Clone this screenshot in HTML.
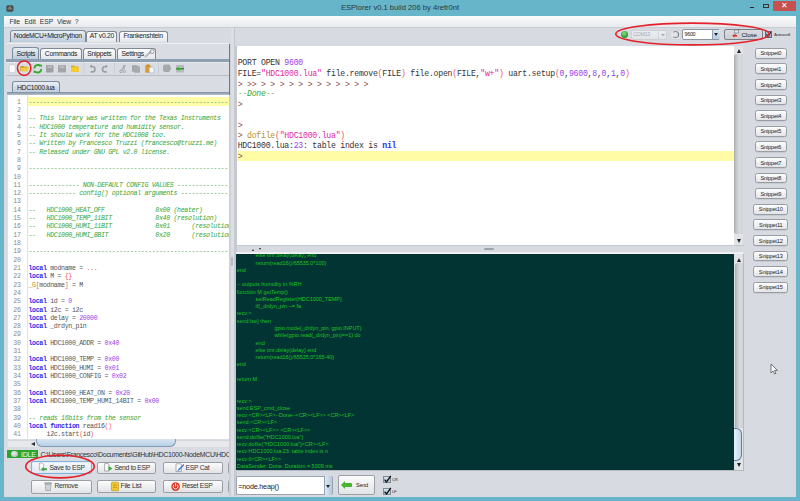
<!DOCTYPE html>
<html><head><meta charset="utf-8">
<style>
*{box-sizing:border-box;margin:0;padding:0}
html,body{width:800px;height:501px;overflow:hidden}
body{position:relative;background:#66b5c8;font-family:"Liberation Sans",sans-serif;color:#222}
.a{position:absolute}
.ui{font-size:6.8px;letter-spacing:-0.3px;line-height:1;white-space:pre}
.tab{position:absolute;border:1px solid #7f8791;border-bottom:none;border-radius:3px 3px 0 0;background:linear-gradient(#fdfdfd,#e4e6ea);font-size:6.8px;letter-spacing:-0.3px;line-height:1;white-space:pre;text-align:center;color:#222}
.tab.sel{background:linear-gradient(#e9eef4,#bccbdb);border-color:#7d8da0}
.btn{position:absolute;border:1px solid #9a9fa6;border-radius:2px;background:linear-gradient(#fcfcfc,#e2e3e6);font-size:6.8px;letter-spacing:-0.3px;line-height:1;white-space:pre;color:#222}
.snip{position:absolute;border:1px solid #989ca3;border-radius:2.5px;background:linear-gradient(#fdfdfd,#e3e4e7);font-size:5.6px;letter-spacing:-0.15px;line-height:1;white-space:pre;color:#222;text-align:center;box-shadow:0 .6px .6px #b9bdc3}
.ed{position:absolute;font-family:"Liberation Mono",monospace;font-size:6.6px;letter-spacing:-0.33px;white-space:pre}
.ln{position:absolute;font-family:"Liberation Mono",monospace;font-size:6.6px;letter-spacing:-0.27px;white-space:pre;color:#8a8a8a;text-align:right;width:13px}
.cm{color:#36a636;font-style:italic}
.kw{color:#2b2bf0;font-weight:bold}
.nu{color:#9b3ce8}
.br{color:#f25555}
.id{color:#555}
.st{color:#e02aa8}
.ol{color:#b8902e}
.id3{color:#333}
.gt{color:#8c4c4c;position:relative;top:0.7px}
.cm2{color:#36a636;font-style:italic}
.tm{position:absolute;font-family:"Liberation Mono",monospace;font-size:8.2px;letter-spacing:-0.25px;white-space:pre;color:#333;left:237.7px}
.lg{position:absolute;font-family:"Liberation Sans",sans-serif;font-size:5.45px;white-space:pre;color:#1cc41c}
</style></head><body>
<!-- title bar -->
<svg class="a" style="left:5.5px;top:4.5px" width="8" height="7" viewBox="0 0 8 7"><rect x="0.3" y="0.3" width="7.2" height="6.4" rx="1.6" fill="#4a4848"/><path d="M2.6 2.2h2.6M1.6 3.9h4.6" stroke="#d8d8d8" stroke-width="0.6"/></svg>
<div class="a" style="left:0;top:4.4px;width:800px;text-align:center;font-size:7.6px;line-height:1;color:#2a3a40;white-space:pre">ESPlorer v0.1 build 206 by 4refr0nt</div>
<div class="a" style="left:750px;top:7px;width:4px;height:1.3px;background:#2a2a2a"></div>
<div class="a" style="left:763px;top:3.5px;width:6px;height:4.5px;border:1px solid #333;border-top-width:1.6px"></div>
<div class="a" style="left:773px;top:1px;width:23px;height:10px;background:#c75050"></div>
<div class="a" style="left:773px;top:1px;width:23px;height:10px;color:#fff;font-size:8px;line-height:10px;text-align:center">&#x2715;</div>

<!-- client -->
<div class="a" style="left:4px;top:16px;width:792px;height:480.7px;background:#d7dae1"></div>
<!-- menu -->
<div class="a" style="left:4px;top:16px;width:792px;height:11.5px;background:linear-gradient(#fbfbfc,#e9eaee);border-bottom:1px solid #c9ccd2"></div>
<div class="a ui" style="left:9.4px;top:18.9px;color:#333;letter-spacing:-0.1px">File</div>
<div class="a ui" style="left:24.4px;top:18.9px;color:#333;letter-spacing:-0.1px">Edit</div>
<div class="a ui" style="left:39.8px;top:18.9px;color:#333;letter-spacing:-0.1px">ESP</div>
<div class="a ui" style="left:56.9px;top:18.9px;color:#333;letter-spacing:-0.1px">View</div>
<div class="a ui" style="left:74.8px;top:18.9px;color:#333;letter-spacing:-0.1px">?</div>

<!-- LEFT PANEL -->
<!-- outer tabs -->
<div class="tab sel" style="left:10px;top:29.6px;width:75.5px;height:12.4px;padding-top:2.5px">NodeMCU+MicroPython</div>
<div class="tab" style="left:86.2px;top:30.8px;width:31.3px;height:11.2px;padding-top:1.7px">AT v0.20</div>
<div class="tab" style="left:118.6px;top:30.8px;width:49px;height:11.2px;padding-top:1.7px">Frankenshtein</div>
<!-- outer content panel -->
<div class="a" style="left:5px;top:42.5px;width:225.5px;height:453px;background:#d9dce2;border-top:1px solid #eceef1;border-right:1px solid #8d96a0;border-top-left-radius:3px"></div>
<!-- inner tabs -->
<div class="tab sel" style="left:12.4px;top:47.2px;width:27px;height:11.5px;padding-top:3px">Scripts</div>
<div class="tab" style="left:40px;top:47.6px;width:42px;height:11px;padding-top:2.4px">Commands</div>
<div class="tab" style="left:82.8px;top:47.6px;width:33.2px;height:11px;padding-top:2.4px">Snippets</div>
<div class="tab" style="left:116.6px;top:47.6px;width:39.8px;height:11px;padding-top:2.4px;text-align:left;padding-left:4px">Settings</div>
<svg class="a" style="left:144px;top:49px" width="12" height="9" viewBox="0 0 12 9"><path d="M1.5 7.5l5-4.6" stroke="#8a8f96" stroke-width="1.6" stroke-linecap="round"/><path d="M1.5 7.5l5-4.6" stroke="#f4f5f7" stroke-width="0.6" stroke-linecap="round"/><circle cx="8" cy="2.6" r="2" fill="none" stroke="#8a8f96" stroke-width="0.9"/></svg>
<div class="a" style="left:6.4px;top:59px;width:223.5px;height:2.7px;background:#8e9fb2"></div>
<!-- toolbar -->
<div class="a" style="left:6.4px;top:61.6px;width:223.5px;height:14.6px;background:#d9dce2;border-top:0.8px solid #e8eaee;border-bottom:0.9px solid #b9bdc5"></div>
<svg class="a" style="left:0;top:60px" width="230" height="18" viewBox="0 60 230 18">
<!-- new file -->
<path d="M9.3 64.7h4.4l1.6 1.6v6.1h-6z" fill="#fbfbfb" stroke="#c2c4c8" stroke-width="0.6"/>
<!-- open folder -->
<path d="M20.8 66h3l.7.8h3.3v1.2h-7z" fill="#c89a1c"/>
<path d="M20.6 71.2l1.4-3.8h7l-1.4 3.8z" fill="#f2cc3a"/>
<path d="M20.6 66.5v4.7" stroke="#c89a1c" stroke-width="0.7"/>
<!-- green refresh -->
<path d="M34.3 68.5a3.6 3.6 0 0 1 6.2-2.4" fill="none" stroke="#36a82e" stroke-width="1.9"/>
<path d="M41.3 69a3.6 3.6 0 0 1 -6.2 2.4" fill="none" stroke="#36a82e" stroke-width="1.9"/>
<path d="M39.2 64.6l2.8 0.2-0.4 3z" fill="#36a82e"/>
<path d="M36.3 72.9l-2.8-0.2 0.4-3z" fill="#36a82e"/>
<!-- gray disks -->
<rect x="46" y="65" width="7.5" height="7.5" rx="0.8" fill="#9d9fa2"/>
<rect x="47.2" y="65.6" width="5" height="2.6" fill="#b6b8bb"/>
<rect x="58" y="65" width="8" height="7.5" rx="0.8" fill="#a2a4a7"/>
<rect x="59.5" y="65.6" width="5" height="2.6" fill="#b9bbbe"/>
<!-- yellow folder -->
<path d="M71 65.6h3l.8.9h3.7v5.5h-7.5z" fill="#e2ae0a"/>
<rect x="71" y="67.3" width="7.5" height="4.7" fill="#f6cd2a"/>
<!-- separators -->
<rect x="83.6" y="62.5" width="0.7" height="12" fill="#c5c8ce"/>
<rect x="114" y="62.5" width="0.7" height="12" fill="#c5c8ce"/>
<rect x="158.2" y="62.5" width="0.7" height="12" fill="#c5c8ce"/>
<!-- undo/redo -->
<path d="M90.5 66.3l1.8 0.2a2.6 2.6 0 0 1 0 5.4h-1.6" fill="none" stroke="#9c9ea1" stroke-width="1.6"/>
<path d="M89.4 66.3l2.4-1.6v3.2z" fill="#9c9ea1"/>
<path d="M107 66.3l-1.8 0.2a2.6 2.6 0 0 0 0 5.4h1.6" fill="none" stroke="#9c9ea1" stroke-width="1.6"/>
<path d="M108.1 66.3l-2.4-1.6v3.2z" fill="#9c9ea1"/>
<!-- scissors -->
<path d="M125.5 65l-3.8 5" stroke="#9fa1a4" stroke-width="1.2"/>
<path d="M123.5 65.3l0.8 4" stroke="#9fa1a4" stroke-width="1"/>
<circle cx="121" cy="71.3" r="1.3" fill="none" stroke="#9fa1a4" stroke-width="0.9"/>
<circle cx="124.4" cy="71.5" r="1.1" fill="none" stroke="#9fa1a4" stroke-width="0.9"/>
<!-- copy -->
<rect x="132" y="65.3" width="5.8" height="6.4" rx="0.6" fill="#a3a5a8"/>
<rect x="134" y="66.3" width="6" height="6.4" rx="0.6" fill="#a8aaad"/>
<!-- paste -->
<rect x="145.2" y="65.3" width="5.6" height="7.5" rx="0.8" fill="#e09a2a"/>
<rect x="146.5" y="64.6" width="3" height="1.4" rx="0.5" fill="#c4852a"/>
<path d="M149.2 67.2h3.5l1.3 1.3v4.4h-4.8z" fill="#f4f8fd" stroke="#8aaee0" stroke-width="0.6"/>
<!-- gray rounded -->
<rect x="163" y="64.6" width="7.4" height="7.4" rx="2" fill="#a6a8ab"/>
<path d="M169.5 67.5l1.5 1-1.5 1z" fill="#8d8f92"/>
<!-- green arrow icon -->
<rect x="176" y="65" width="8" height="7.5" fill="#b7babe"/>
<rect x="176" y="68.3" width="8" height="0.9" fill="#3b3d40"/>
<path d="M176.2 68.8l2.5-2.2v1.3h2.5v1.8h-2.5v1.3z" fill="#2fb42a"/>
</svg>

<!-- file tab -->
<div class="tab sel" style="left:12px;top:80.5px;width:47.5px;height:12.3px;padding-top:3.2px">HDC1000.lua</div>
<div class="a" style="left:7px;top:91.7px;width:222px;height:3.3px;background:linear-gradient(#7d8c9e,#9aaabb 50%,#b3c0ce)"></div>
<div class="a" style="left:7px;top:94.8px;width:222px;height:1px;background:#e2e5ea"></div>
<!-- editor -->
<div class="a" style="left:8px;top:94.8px;width:221px;height:344.6px;background:#fff"></div>
<div class="a" style="left:27.3px;top:94.8px;width:0.7px;height:344.8px;background:#e2e2e2"></div>
<div class="a" style="left:27.6px;top:96.8px;width:201.4px;height:8.9px;background:#fffca8"></div>
<div class="a" style="left:8px;top:94.8px;width:221px;height:344.6px;overflow:hidden">
<div class="ln" style="left:-0.3px;top:3.9px;line-height:8.31px">1
2
3
4
5
6
7
8
9
10
11
12
13
14
15
16
17
18
19
20
21
22
23
24
25
26
27
28
29
30
31
32
33
34
35
36
37
38
39
40
41
42</div>
<div class="ed" style="left:20.4px;top:3.9px;line-height:8.31px"><span class="cm">------------------------------------------------------------</span>

<span class="cm">-- This library was written for the Texas Instruments</span>
<span class="cm">-- HDC1000 temperature and humidity sensor.</span>
<span class="cm">-- It should work for the HDC1008 too.</span>
<span class="cm">-- Written by Francesco Truzzi (francesco@truzzi.me)</span>
<span class="cm">-- Released under GNU GPL v2.0 license.</span>

<span class="cm">------------------------------------------------------------</span>

<span class="cm">-------------- NON-DEFAULT CONFIG VALUES --------------------</span>
<span class="cm">------------- config() optional arguments -------------------</span>

<span class="cm">--   HDC1000_HEAT_OFF              0x00 (heater)</span>
<span class="cm">--   HDC1000_TEMP_11BIT            0x40 (resolution)</span>
<span class="cm">--   HDC1000_HUMI_11BIT            0x01      (resolution)</span>
<span class="cm">--   HDC1000_HUMI_8BIT             0x20      (resolution)</span>

<span class="cm">------------------------------------------------------------</span>

<span class="kw">local</span><span class="id"> modname = </span><span class="br">...</span>
<span class="kw">local</span><span class="id"> M = </span><span class="br">{}</span>
<span class="ol">_G</span><span class="br">[</span><span class="id">modname</span><span class="br">]</span><span class="id"> = M</span>

<span class="kw">local</span><span class="id"> id = </span><span class="nu">0</span>
<span class="kw">local</span><span class="id"> i2c = i2c</span>
<span class="kw">local</span><span class="id"> delay = </span><span class="nu">20000</span>
<span class="kw">local</span><span class="id"> _drdyn_pin</span>

<span class="kw">local</span><span class="id"> HDC1000_ADDR = </span><span class="nu">0x40</span>

<span class="kw">local</span><span class="id"> HDC1000_TEMP = </span><span class="nu">0x00</span>
<span class="kw">local</span><span class="id"> HDC1000_HUMI = </span><span class="nu">0x01</span>
<span class="kw">local</span><span class="id"> HDC1000_CONFIG = </span><span class="nu">0x02</span>

<span class="kw">local</span><span class="id"> HDC1000_HEAT_ON = </span><span class="nu">0x20</span>
<span class="kw">local</span><span class="id"> HDC1000_TEMP_HUMI_14BIT = </span><span class="nu">0x00</span>

<span class="cm">-- reads 16bits from the sensor</span>
<span class="kw">local</span><span class="id"> </span><span class="kw">function</span><span class="id"> read16</span><span class="br">()</span>
<span class="id">     i2c.start</span><span class="br">(</span><span class="id">id</span><span class="br">)</span>
<span class="id">     i2c.address</span><span class="br">(</span><span class="id">id, HDC1000_ADDR, i2c.RECEIVER</span><span class="br">)</span></div>
</div>
<!-- hscroll -->
<div class="a" style="left:8px;top:439.5px;width:221.7px;height:7.5px;background:#e6e8eb;border-top:1px solid #d4d6da"></div>
<div class="a" style="left:30.5px;top:441.5px;width:0;height:0;border-right:4px solid #333;border-top:2.3px solid transparent;border-bottom:2.3px solid transparent"></div>
<div class="a" style="left:36px;top:439.3px;width:140px;height:7.5px;background:linear-gradient(#d8e6f3,#b7cfe6);border:1px solid #7f9bb6;border-radius:0 0 6px 6px;border-top:none"></div>
<!-- status -->
<div class="a" style="left:6.8px;top:449.6px;width:31.2px;height:8.6px;background:#2aa52e"></div>
<div class="a" style="left:11px;top:450.7px;width:6.8px;height:6.5px;border-radius:50%;background:radial-gradient(circle at 40% 35%,#f0f0f0,#a9a9a9)"></div>
<div class="a ui" style="left:21px;top:450.8px;color:#f2f8f2;font-size:7px;letter-spacing:-0.2px">IDLE</div>
<div class="a ui" style="left:40.4px;top:450.6px;color:#333;font-size:7px;letter-spacing:-0.32px;width:189px;overflow:hidden">C:\Users\Francesco\Documents\GitHub\HDC1000-NodeMCU\HDC1000</div>
<!-- buttons -->
<div class="btn" style="left:31.3px;top:460.6px;width:60.6px;height:13.7px;border-color:#7fb0df;background:linear-gradient(#f5f9fd,#e1e8f0);box-shadow:inset 0 0 0 0.6px #d6e6f6"></div>
<div class="btn" style="left:97px;top:461.5px;width:59.3px;height:12.8px"></div>
<div class="btn" style="left:162.5px;top:461.5px;width:60px;height:12.8px"></div>
<div class="btn" style="left:227.5px;top:461.5px;width:3px;height:12.8px"></div>
<div class="btn" style="left:31.3px;top:479.9px;width:60.6px;height:13.7px"></div>
<div class="btn" style="left:97px;top:479.9px;width:59.3px;height:13.2px"></div>
<div class="btn" style="left:162.5px;top:479.9px;width:60px;height:13.2px"></div>
<div class="btn" style="left:227.5px;top:479.9px;width:3px;height:13.2px"></div>
<svg class="a" style="left:30px;top:460px" width="200" height="36" viewBox="30 460 200 36">
<!-- save -->
<path d="M39.4 463h3l1.3 1.3v5.7h-4.3z" fill="#fafafa" stroke="#8d9094" stroke-width="0.6"/>
<path d="M41 469.2l2.6-2.4v1.4h3.3v2h-3.3v1.4z" fill="#3aa53a"/>
<!-- send -->
<path d="M104.6 463.6h3.6l0.6 0.8v6.6h-4.2z" fill="#fafafa" stroke="#7b7e82" stroke-width="0.6"/>
<path d="M108.7 466l3.6 2.5-3.6 2.5z" fill="#2fae2f"/>
<!-- esp cat -->
<path d="M176 463.8h4.6l0.8 0.8v7h-5.4z" fill="#fafafa" stroke="#7b7e82" stroke-width="0.6"/>
<path d="M177.3 471.2l1-2.2 4.3-4 1 1-4.2 4.2z" fill="#3b7fd8"/>
<path d="M182.4 465l0.9-0.9 1 1-0.9 0.9z" fill="#e33"/>
<!-- trash -->
<rect x="44.6" y="482.6" width="7" height="1.5" rx="0.5" fill="#b9bcc0" stroke="#80848a" stroke-width="0.4"/>
<path d="M45.3 484.3h5.6l-0.5 6.2h-4.6z" fill="#e4e6e9" stroke="#80848a" stroke-width="0.6"/>
<path d="M47.2 485v4.8M49 485v4.8" stroke="#9a9ea3" stroke-width="0.5"/>
<!-- file list -->
<rect x="111.4" y="482.2" width="7.2" height="8.5" rx="0.8" fill="#f0c92a" stroke="#b38d10" stroke-width="0.6"/>
<path d="M113 485h4M113 487.3h4" stroke="#a07c10" stroke-width="0.6"/>
<!-- reset -->
<circle cx="175.6" cy="486.6" r="4.3" fill="#e23a26"/>
<path d="M173.9 484.8a2.4 2.4 0 1 0 3.4 0" fill="none" stroke="#fff" stroke-width="0.9"/>
<path d="M175.6 483.3v3" stroke="#fff" stroke-width="0.9"/>
</svg>

<div class="a ui" style="left:49.4px;top:464.5px;color:#333">Save to ESP</div>
<div class="a ui" style="left:114.4px;top:464.5px;color:#333">Send to ESP</div>
<div class="a ui" style="left:185.6px;top:464.5px;color:#333">ESP Cat</div>
<div class="a ui" style="left:54.4px;top:483.2px;color:#333">Remove</div>
<div class="a ui" style="left:120.6px;top:483.2px;color:#333">File List</div>
<div class="a ui" style="left:181.9px;top:483.2px;color:#333">Reset ESP</div>

<!-- RIGHT PANEL -->
<!-- vertical divider -->
<div class="a" style="left:229px;top:42.5px;width:2px;height:453px;background:#cdd0d6"></div>
<div class="a" style="left:230.5px;top:28px;width:3.5px;height:468px;background:#dcdfe4"></div>
<div class="a" style="left:233.7px;top:28px;width:1.2px;height:17.5px;background:#c3c6cc"></div>
<div class="a" style="left:234px;top:45.5px;width:2.6px;height:450.5px;background:#c6c9d0"></div>
<div class="a" style="left:228.7px;top:43.5px;width:1px;height:51.5px;background:#737a86"></div>
<div class="a" style="left:231.2px;top:256.5px;width:2.2px;height:9.5px;border-radius:1px;background:#b5b9c0"></div>
<!-- top toolbar -->
<div class="a" style="left:620.8px;top:30.8px;width:7px;height:7px;border-radius:50%;background:radial-gradient(circle at 45% 35%,#8fe08f,#2e9e33 60%,#1f7a24)"></div>
<div class="a" style="left:630.5px;top:29.5px;width:36px;height:10px;border:1px solid #cdd0d5;border-radius:2px;background:linear-gradient(#eceef1,#e1e3e7)"></div>
<div class="a" style="left:658px;top:30px;width:1px;height:9px;background:#d3d6da"></div>
<div class="a ui" style="left:633px;top:32px;font-size:5.4px;color:#a9abb0">COM13</div>
<div class="a" style="left:661px;top:33.5px;width:0;height:0;border-top:2.5px solid #9ea2a8;border-left:2px solid transparent;border-right:2px solid transparent"></div>
<div class="a" style="left:669.5px;top:29.5px;width:11.5px;height:10px;border:1px solid #d3d6da;border-radius:2px;background:#e1e3e7"></div>
<div class="a" style="left:671.8px;top:30.8px;width:7px;height:7px;border-radius:50%;border:1.3px solid #8a8d92;border-left-color:transparent;border-right-color:#6f7278"></div>
<div class="a" style="left:682.3px;top:29.3px;width:38.2px;height:10.5px;border:1px solid #8c96a2;border-radius:2px;background:#fff"></div>
<div class="a" style="left:712px;top:29.8px;width:8px;height:9.5px;background:linear-gradient(#dce7f2,#b9cde0);border-left:1px solid #8fa2b6"></div>
<div class="a" style="left:714.2px;top:33.4px;width:0;height:0;border-top:3px solid #222;border-left:2px solid transparent;border-right:2px solid transparent"></div>
<div class="a ui" style="left:684.5px;top:32px;font-size:5.4px;color:#222">9600</div>
<div class="a" style="left:723.5px;top:29.3px;width:39.3px;height:10.5px;border:1px solid #7b8088;border-radius:2px;background:linear-gradient(#d9dce1,#ccd0d6)"></div>
<svg class="a" style="left:730px;top:29px" width="12" height="10" viewBox="0 0 12 10"><rect x="4.3" y="1" width="4.4" height="3" fill="#e8ecf4" stroke="#6a7380" stroke-width="0.6"/><path d="M8.7 1v-0.8" stroke="#6a7380" stroke-width="0.5"/><path d="M2.2 6.8l2.3-1.8v1.1h2.6v1.4h-2.6v1.1z" fill="#e3261d"/><path d="M5.5 4.6v1.4" stroke="#c44" stroke-width="0.6"/></svg>
<div class="a ui" style="left:741.5px;top:31.9px;font-size:6.2px;letter-spacing:-0.1px;color:#1a1a1a">Close</div>
<div class="a" style="left:764.5px;top:31px;width:7px;height:6.6px;border:1px solid #5d6b7c;background:linear-gradient(#b9c7d6,#8fa3b8)"></div>
<svg class="a" style="left:764.5px;top:31px" width="7" height="7" viewBox="0 0 7 7"><path d="M1.4 3.4l1.6 2 2.8-4.2" fill="none" stroke="#111" stroke-width="1.1"/></svg>
<div class="a ui" style="left:774px;top:32.8px;font-size:4.3px;color:#333">Autoscroll</div>
<!-- terminal -->
<div class="a" style="left:236.6px;top:45.5px;width:497.5px;height:199.5px;background:#fff"></div>
<div class="a" style="left:236.6px;top:151.1px;width:497.5px;height:9.8px;background:#fffca5"></div>
<div class="a" style="left:734.1px;top:45.6px;width:8.5px;height:199.2px;background:#e3e4e7"></div>
<div class="a" style="left:734.1px;top:54.4px;width:8.5px;height:180px;background:linear-gradient(90deg,#a9acb1,#c3c5c9 25%,#d9dadd 60%,#d0d2d5);border-radius:3px 0 0 3px"></div>
<div class="a" style="left:736.6px;top:49px;width:0;height:0;border-bottom:4px solid #222;border-left:2.3px solid transparent;border-right:2.3px solid transparent"></div>
<div class="a" style="left:736.6px;top:239px;width:0;height:0;border-top:4px solid #222;border-left:2.3px solid transparent;border-right:2.3px solid transparent"></div>

<div class="tm" style="top:47.9px;line-height:10.35px">
<span class="id3">PORT OPEN </span><span class="nu">9600</span>
<span class="id3">FILE=</span><span class="st">"HDC1000.lua"</span><span class="id3"> file.remove</span><span class="br">(</span><span class="id3">FILE</span><span class="br">)</span><span class="id3"> file.open</span><span class="br">(</span><span class="id3">FILE,</span><span class="st">"w+"</span><span class="br">)</span><span class="id3"> uart.setup</span><span class="br">(</span><span class="nu">0</span><span class="id3">,</span><span class="nu">9600</span><span class="id3">,</span><span class="nu">8</span><span class="id3">,</span><span class="nu">0</span><span class="id3">,</span><span class="nu">1</span><span class="id3">,</span><span class="nu">0</span><span class="br">)</span>
<span class="gt">&gt; &gt;&gt; &gt; &gt; &gt; &gt; &gt; &gt; &gt; &gt; &gt; &gt; &gt; &gt; </span>
<span class="cm2">--Done--</span>
<span class="gt">&gt;</span>

<span class="gt">&gt;</span>
<span class="gt">&gt; </span><span class="ol">dofile</span><span class="br">(</span><span class="st">"HDC1000.lua"</span><span class="br">)</span>
<span class="id3">HDC1000.lua:</span><span class="nu">23</span><span class="id3">: table index is </span><span class="kw">nil</span>
<span class="gt">&gt;</span></div>

<div class="snip" style="left:754.7px;top:47.80px;width:32.3px;height:10.8px;padding-top:2.7px">Snippet0</div>
<div class="snip" style="left:754.7px;top:63.40px;width:32.3px;height:10.8px;padding-top:2.7px">Snippet1</div>
<div class="snip" style="left:754.7px;top:79.00px;width:32.3px;height:10.8px;padding-top:2.7px">Snippet2</div>
<div class="snip" style="left:754.7px;top:94.60px;width:32.3px;height:10.8px;padding-top:2.7px">Snippet3</div>
<div class="snip" style="left:754.7px;top:110.20px;width:32.3px;height:10.8px;padding-top:2.7px">Snippet4</div>
<div class="snip" style="left:754.7px;top:125.80px;width:32.3px;height:10.8px;padding-top:2.7px">Snippet5</div>
<div class="snip" style="left:754.7px;top:141.40px;width:32.3px;height:10.8px;padding-top:2.7px">Snippet6</div>
<div class="snip" style="left:754.7px;top:157.00px;width:32.3px;height:10.8px;padding-top:2.7px">Snippet7</div>
<div class="snip" style="left:754.7px;top:172.60px;width:32.3px;height:10.8px;padding-top:2.7px">Snippet8</div>
<div class="snip" style="left:754.7px;top:188.20px;width:32.3px;height:10.8px;padding-top:2.7px">Snippet9</div>
<div class="snip" style="left:753.2px;top:203.80px;width:35.2px;height:10.8px;padding-top:2.7px">Snippet10</div>
<div class="snip" style="left:753.2px;top:219.40px;width:35.2px;height:10.8px;padding-top:2.7px">Snippet11</div>
<div class="snip" style="left:753.2px;top:235.00px;width:35.2px;height:10.8px;padding-top:2.7px">Snippet12</div>
<div class="snip" style="left:753.2px;top:250.60px;width:35.2px;height:10.8px;padding-top:2.7px">Snippet13</div>
<div class="snip" style="left:753.2px;top:266.20px;width:35.2px;height:10.8px;padding-top:2.7px">Snippet14</div>
<div class="snip" style="left:753.2px;top:281.80px;width:35.2px;height:10.8px;padding-top:2.7px">Snippet15</div>
<!-- splitter -->
<div class="a" style="left:235.5px;top:244.8px;width:508px;height:1.7px;background:#c3c7ce"></div>
<div class="a" style="left:235.5px;top:251.5px;width:508px;height:1.5px;background:#eceef1"></div>
<div class="a" style="left:484.3px;top:248px;width:10px;height:1.8px;background:#9ea3ab;border-radius:1px"></div>
<div class="a" style="left:252.3px;top:248.5px;width:0;height:0;border-bottom:2.2px solid #222;border-left:1.5px solid transparent;border-right:1.5px solid transparent"></div>
<div class="a" style="left:258.5px;top:248.3px;width:0;height:0;border-top:2.2px solid #222;border-left:1.5px solid transparent;border-right:1.5px solid transparent"></div>
<!-- log -->
<div class="a" style="left:235.5px;top:252.8px;width:508px;height:217.8px;border:0.8px solid #b5b9c0;border-top-color:#f4f4f6;border-left-color:#f4f4f6;background:#dcdee2"></div>
<div class="a" style="left:236.3px;top:253.6px;width:498.2px;height:216px;background:#023434;overflow:hidden" id="logbox"></div>
<div class="a" style="left:0;top:0;width:734.5px;height:469.6px;overflow:hidden;clip-path:inset(253.6px 0 0 236.3px)"><div class="lg" style="left:255.6px;top:252.37px;line-height:7.26px">else tmr.delay(delay) end</div>
<div class="lg" style="left:255.6px;top:259.63px;line-height:7.26px">return(read16()/65535.0*100)</div>
<div class="lg" style="left:236.8px;top:266.89px;line-height:7.26px">end</div>
<div class="lg" style="left:236.8px;top:281.42px;line-height:7.26px">-- outputs humidity in %RH</div>
<div class="lg" style="left:236.8px;top:288.68px;line-height:7.26px">function M.getTemp()</div>
<div class="lg" style="left:255.6px;top:295.94px;line-height:7.26px">setReadRegister(HDC1000_TEMP)</div>
<div class="lg" style="left:255.6px;top:303.20px;line-height:7.26px">if(_drdyn_pin ~= fa</div>
<div class="lg" style="left:236.8px;top:310.46px;line-height:7.26px">recv:&gt;</div>
<div class="lg" style="left:236.8px;top:317.73px;line-height:7.26px">send:lse) then</div>
<div class="lg" style="left:274.4px;top:324.99px;line-height:7.26px">gpio.mode(_drdyn_pin, gpio.INPUT)</div>
<div class="lg" style="left:274.4px;top:332.25px;line-height:7.26px">while(gpio.read(_drdyn_pin)==1) do</div>
<div class="lg" style="left:255.6px;top:339.51px;line-height:7.26px">end</div>
<div class="lg" style="left:255.6px;top:346.77px;line-height:7.26px">else tmr.delay(delay) end</div>
<div class="lg" style="left:255.6px;top:354.04px;line-height:7.26px">return(read16()/65535.0*165-40)</div>
<div class="lg" style="left:236.8px;top:361.30px;line-height:7.26px">end</div>
<div class="lg" style="left:236.8px;top:375.82px;line-height:7.26px">return M</div>
<div class="lg" style="left:236.8px;top:397.61px;line-height:7.26px">recv:&gt;</div>
<div class="lg" style="left:236.8px;top:404.87px;line-height:7.26px">send:ESP_cmd_close</div>
<div class="lg" style="left:236.8px;top:412.13px;line-height:7.26px">recv:&lt;CR&gt;&lt;LF&gt;--Done--&lt;CR&gt;&lt;LF&gt;&gt; &lt;CR&gt;&lt;LF&gt;</div>
<div class="lg" style="left:236.8px;top:419.39px;line-height:7.26px">send:&lt;CR&gt;&lt;LF&gt;</div>
<div class="lg" style="left:236.8px;top:426.66px;line-height:7.26px">recv:&lt;CR&gt;&lt;LF&gt;&gt; &lt;CR&gt;&lt;LF&gt;&gt;</div>
<div class="lg" style="left:236.8px;top:433.92px;line-height:7.26px">send:dofile(&quot;HDC1000.lua&quot;)</div>
<div class="lg" style="left:236.8px;top:441.18px;line-height:7.26px">recv:dofile(&quot;HDC1000.lua&quot;)&lt;CR&gt;&lt;LF&gt;</div>
<div class="lg" style="left:236.8px;top:448.44px;line-height:7.26px">recv:HDC1000.lua:23: table index is n</div>
<div class="lg" style="left:236.8px;top:455.70px;line-height:7.26px">recv:il&lt;CR&gt;&lt;LF&gt;&gt;</div>
<div class="lg" style="left:236.8px;top:462.97px;line-height:7.26px">DataSender: Done. Duration = 5009 ms</div></div>
<div class="a" style="left:734.5px;top:253.6px;width:8.5px;height:216px;background:#e3e4e7"></div>
<div class="a" style="left:734.5px;top:263px;width:8.5px;height:165px;background:linear-gradient(90deg,#a9acb1,#c3c5c9 25%,#d9dadd 60%,#d0d2d5);border-radius:3px 0 0 0"></div>
<div class="a" style="left:736.7px;top:257.5px;width:0;height:0;border-bottom:4px solid #222;border-left:2.3px solid transparent;border-right:2.3px solid transparent"></div>
<div class="a" style="left:736.7px;top:463px;width:0;height:0;border-top:4px solid #222;border-left:2.3px solid transparent;border-right:2.3px solid transparent"></div>
<div class="a" style="left:734.3px;top:428px;width:8px;height:32.5px;background:linear-gradient(90deg,#e9f1fa,#c3d7ea);border:1px solid #5f7e9e;border-left:none;border-radius:0 6px 6px 0"></div>
<!-- command -->
<div class="a" style="left:236.3px;top:475.8px;width:96.3px;height:19.4px;border:1px solid #9ba4ae;border-radius:2px;background:#fff"></div>
<div class="a" style="left:324px;top:476.3px;width:8.2px;height:18.5px;background:linear-gradient(90deg,#dfe8f2,#b5c8dc);border-left:1px solid #8fa2b6;border-radius:0 2px 2px 0"></div>
<div class="a" style="left:325.8px;top:484.5px;width:0;height:0;border-top:3px solid #222;border-left:2.2px solid transparent;border-right:2.2px solid transparent"></div>
<div class="a ui" style="left:238.3px;top:482.5px;font-size:7.2px;letter-spacing:-0.2px;color:#222">=node.heap()</div>
<div class="btn" style="left:338px;top:475.3px;width:37px;height:20.1px"></div>
<div class="a" style="left:343px;top:482.8px;width:9px;height:4px;background:#47b52f;border-radius:1px"></div>
<div class="a" style="left:340.5px;top:480.5px;width:0;height:0;border-right:4px solid #47b52f;border-top:4.3px solid transparent;border-bottom:4.3px solid transparent"></div>
<div class="a ui" style="left:356px;top:483px;font-size:5.6px;color:#222">Send</div>
<div class="a" style="left:383.2px;top:475.6px;width:7.5px;height:7.3px;border:1px solid #7e8b99;background:linear-gradient(#d8e2ec,#aebfd0)"></div>
<svg class="a" style="left:383.0px;top:474.5px" width="9" height="9" viewBox="0 0 9 9"><path d="M1.6 4.6l1.9 2.4 4.3-6" fill="none" stroke="#111" stroke-width="1.3"/></svg>
<div class="a ui" style="left:392px;top:478px;font-size:4.3px;color:#333">CR</div>
<div class="a" style="left:383.2px;top:487.7px;width:7.5px;height:7.3px;border:1px solid #7e8b99;background:linear-gradient(#d8e2ec,#aebfd0)"></div>
<svg class="a" style="left:383.0px;top:486.6px" width="9" height="9" viewBox="0 0 9 9"><path d="M1.6 4.6l1.9 2.4 4.3-6" fill="none" stroke="#111" stroke-width="1.3"/></svg>
<div class="a ui" style="left:392px;top:490px;font-size:4.3px;color:#333">LF</div>
<svg class="a" style="left:770px;top:363px" width="10" height="12" viewBox="0 0 10 12"><path d="M1 1v9l2-2 1.6 3 1.4-.7-1.5-2.9h3z" fill="#fff" stroke="#555" stroke-width="0.8" stroke-linejoin="round"/></svg>
<!-- ellipses -->
<svg class="a" style="left:0;top:0" width="800" height="501" viewBox="0 0 800 501"><g fill="none" stroke="#e4212a" stroke-width="1.6"><ellipse cx="692.5" cy="34" rx="76.7" ry="10.9"/><ellipse cx="60" cy="466.6" rx="34.3" ry="11.3"/><ellipse cx="24.15" cy="68.15" rx="6.7" ry="7.2"/></g></svg>

</body></html>
